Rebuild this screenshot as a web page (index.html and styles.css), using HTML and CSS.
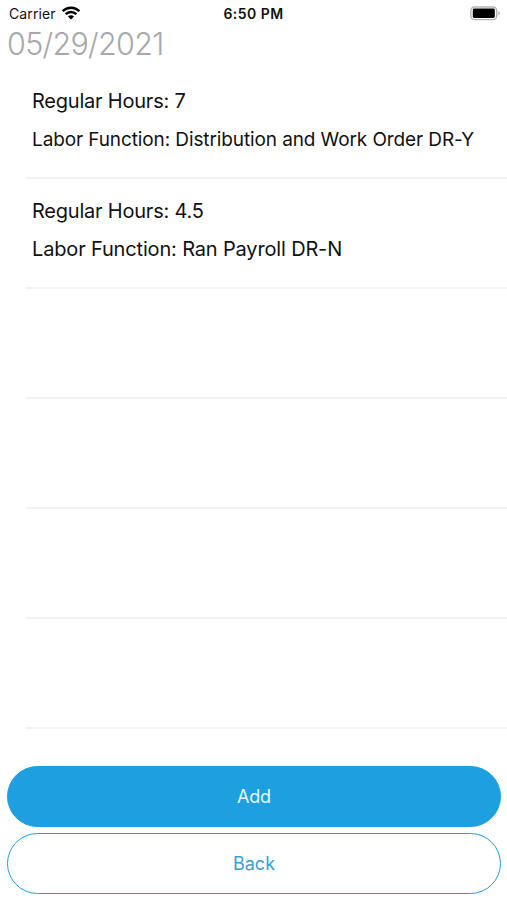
FILE: index.html
```html
<!DOCTYPE html>
<html lang="en">

<head>
    <meta charset="UTF-8">
    <meta name="viewport" content="width=device-width, initial-scale=1.0">
    <title>05/29/2021</title>
    <link rel="stylesheet" href="styles.css">
</head>

<body>
    <div class="main">
        <div class="status">
            <div class="carrier">
                <span>Carrier</span>
                <svg class="wifi" width="20" height="14" viewBox="0 0 20 14">
                    <path d="M1.7 5.2a11.7 11.7 0 0 1 16.6 0M4.7 8.2a7.5 7.5 0 0 1 10.6 0" fill="none" stroke="#000" stroke-width="2.5" />
                    <path d="M10 13.6L6.9 10.5a4.4 4.4 0 0 1 6.2 0z" />
                </svg>
            </div>
            <div class="time">6:50 PM</div>
            <svg class="battery" width="32" height="16" viewBox="0 0 32 16">
                <rect x="1.9" y="1" width="25.8" height="12.6" rx="3.6" fill="#fff" stroke="#b4b4b4" stroke-width="1.4" />
                <rect x="3.8" y="2.6" width="22" height="9.4" rx="1.4" />
                <path d="M29.4 5.1a2.4 2.4 0 0 1 0 4.4z" fill="#b4b4b4" />
            </svg>
        </div>

        <h1 class="date">05/29/2021</h1>

        <ul class="list">
            <li>
                <p class="hours">Regular Hours: 7</p>
                <p class="labor small">Labor Function: Distribution and Work Order DR-Y</p>
            </li>
            <li>
                <p class="hours">Regular Hours: 4.5</p>
                <p class="labor">Labor Function: Ran Payroll DR-N</p>
            </li>
            <li></li>
            <li></li>
            <li></li>
            <li></li>
        </ul>

        <div class="buttons">
            <button class="btn add">Add</button>
            <button class="btn back">Back</button>
        </div>
    </div>
</body>

</html>
```
FILE: styles.css
```css
* {
    padding: 0;
    margin: 0;
    box-sizing: border-box;
    list-style: none;
}

body {
    background-color: #fff;
    color: #111;
    font-family: Inter, "Liberation Sans", sans-serif;
}

.main {
    width: 507px;
    height: 900px;
    display: flex;
    flex-direction: column;
    overflow: hidden;
}

.status {
    display: grid;
    grid-template-columns: 1fr auto 1fr;
    align-items: center;
    height: 27px;
    padding: 0 6px 0 9px;
}

.carrier {
    display: flex;
    align-items: center;
    gap: 5px;
    font-size: 14px;
    letter-spacing: 0.1px;
}

.wifi {
    margin-bottom: 2px;
}

.time {
    margin-right: 3px;
    font-size: 14px;
    font-weight: 600;
    letter-spacing: 0.45px;
}

.battery {
    justify-self: end;
}

.date {
    height: 42px;
    padding-left: 7px;
    color: #a8a8aa;
    font-size: 30.5px;
    font-weight: 300;
    letter-spacing: -0.7px;
    line-height: 34px;
}

.list li {
    height: 110px;
    margin-left: 26px;
    padding: 13px 0 0 6px;
    border-bottom: 2px solid #f3f3f3;
}

.list p {
    height: 38px;
    line-height: 38px;
    font-size: 20px;
    letter-spacing: -0.22px;
    white-space: nowrap;
}

.list .labor {
    letter-spacing: -0.16px;
}

.list .small {
    font-size: 19px;
    letter-spacing: -0.11px;
    line-height: 40px;
}

.buttons {
    display: flex;
    flex-direction: column;
    gap: 6px;
    padding: 37px 6px 0 7px;
}

.btn {
    height: 61px;
    border: 1px solid #1e9fe0;
    border-radius: 31px;
    font-family: inherit;
    font-size: 18px;
    letter-spacing: -0.2px;
}

.add {
    background-color: #1e9fe0;
    color: #e8f6fd;
}

.back {
    background-color: #fff;
    color: #369fd9;
    letter-spacing: 0;
}
```
